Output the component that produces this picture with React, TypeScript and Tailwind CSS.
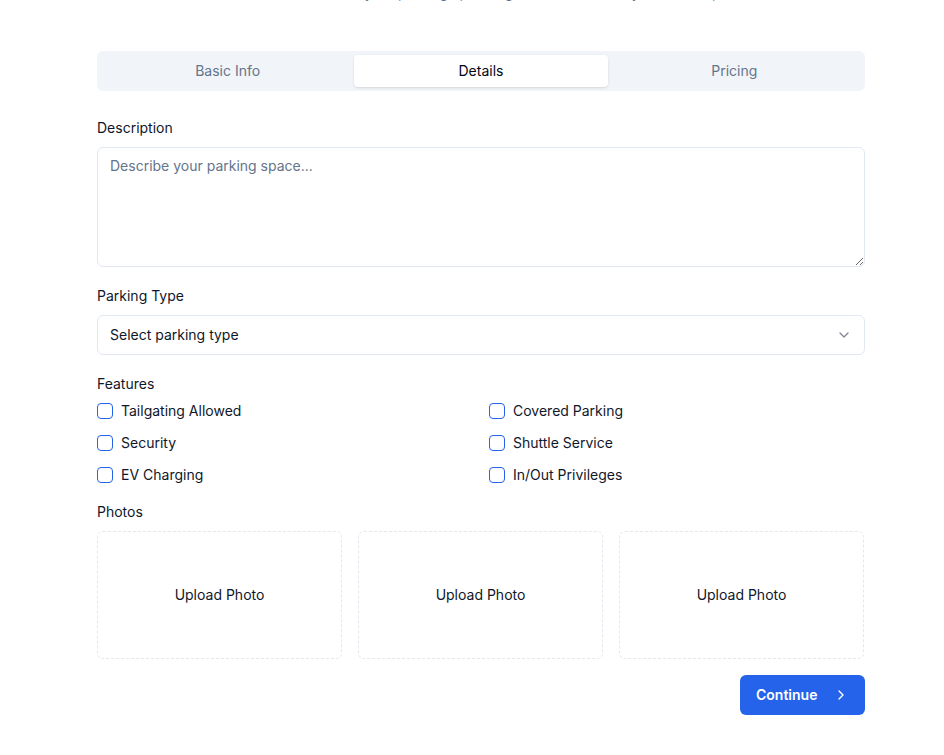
import { ChevronDown, ChevronRight } from "lucide-react";

export default function App() {
  const features = [
    "Tailgating Allowed",
    "Covered Parking",
    "Security",
    "Shuttle Service",
    "EV Charging",
    "In/Out Privileges",
  ];

  return (
    <div className="min-h-screen bg-white text-[#0f172a] overflow-hidden" style={{ fontFamily: "Inter, 'Noto Sans', sans-serif" }}>
      <div className="w-[768px] ml-[97px] pb-10">
        {/* subtitle, scrolled mostly out of view */}
        <p className="-mt-[17px] h-[20px] text-center text-sm text-[#64748b]">
          Provide the details of your parking spot so guests know exactly what to expect
        </p>

        {/* Tabs */}
        <div className="mt-[48px] h-10 rounded-md bg-[#f1f5f9] p-1 grid grid-cols-3 text-sm">
          <button className="rounded-sm text-[#64748b]">Basic Info</button>
          <button className="rounded-sm bg-white text-[#020617] shadow-sm">Details</button>
          <button className="rounded-sm text-[#64748b]">Pricing</button>
        </div>

        {/* Description */}
        <label className="block mt-[30px] text-sm leading-none">Description</label>
        <textarea
          className="mt-3 block w-full h-[120px] rounded-md border border-[#e2e8f0] px-3 py-2 text-sm placeholder:text-[#64748b] outline-none"
          placeholder="Describe your parking space..."
        />

        {/* Parking Type */}
        <label className="block mt-[22px] text-sm leading-none">Parking Type</label>
        <button className="mt-3 flex w-full h-10 items-center justify-between rounded-md border border-[#e2e8f0] px-3 text-sm">
          <span>Select parking type</span>
          <ChevronDown className="h-4 w-4 opacity-50" />
        </button>

        {/* Features */}
        <label className="block mt-[22px] text-sm leading-none">Features</label>
        <div className="mt-[10px] grid grid-cols-2 gap-x-4 gap-y-3">
          {features.map((f) => (
            <div key={f} className="flex items-center gap-2 h-5">
              <span className="h-4 w-4 rounded-[4px] border border-[#2563eb] shrink-0" />
              <span className="text-sm">{f}</span>
            </div>
          ))}
        </div>

        {/* Photos */}
        <label className="block mt-5 text-sm leading-none">Photos</label>
        <div className="mt-3 grid grid-cols-3 gap-4 pr-px">
          {[0, 1, 2].map((i) => (
            <div
              key={i}
              className="h-32 rounded-md border border-dashed border-[#e2e8f0] flex items-center justify-center text-sm"
            >
              Upload Photo
            </div>
          ))}
        </div>

        <div className="mt-4 flex justify-end">
          <button className="h-10 w-[125px] rounded-md bg-[#2563eb] px-4 flex items-center justify-between text-sm font-semibold text-white">
            <span>Continue</span>
            <ChevronRight className="h-4 w-4" />
          </button>
        </div>
      </div>
    </div>
  );
}
